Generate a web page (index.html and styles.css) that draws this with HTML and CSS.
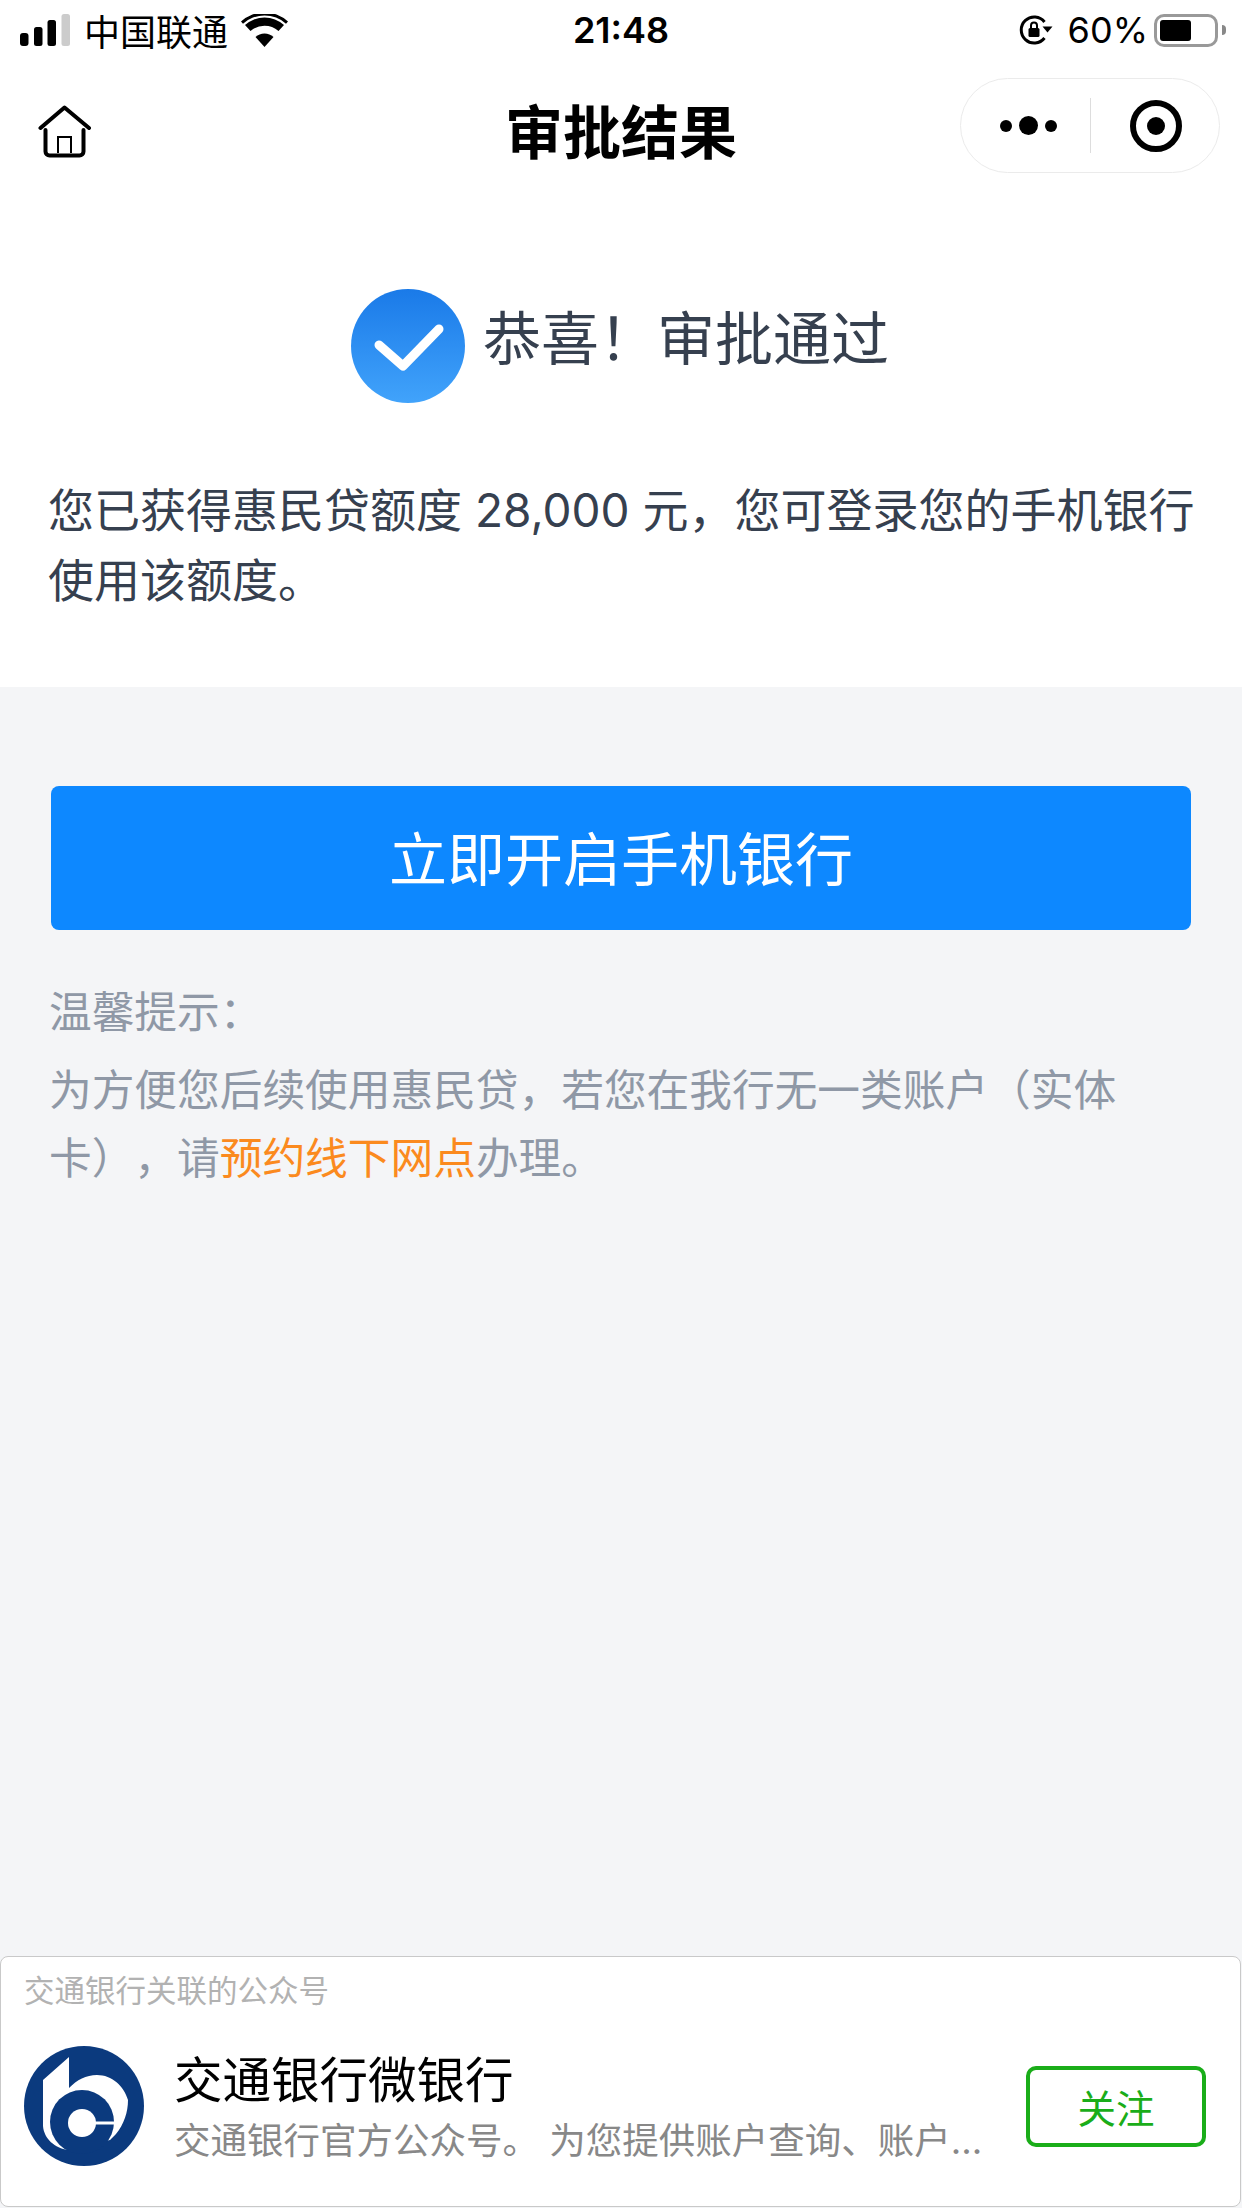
FILE: index.html
```html
<!DOCTYPE html>
<html lang="zh">
<head>
<meta charset="utf-8">
<title>审批结果</title>
<link rel="stylesheet" href="styles.css">
</head>
<body>
<div class="page">
  <header class="statusbar">
    <div class="sb-left">
      <svg class="signal" width="50" height="32" viewBox="0 0 50 32"><rect x="0" y="19" width="8.500" height="13" rx="3" fill="#000"/><rect x="14" y="13" width="8.500" height="19" rx="2.500" fill="#000"/><rect x="27.500" y="6" width="8.500" height="26" rx="2.500" fill="#000"/><rect x="41.500" y="0" width="8.500" height="32" rx="2.500" fill="#ccc"/></svg>
      <span class="carrier">中国联通</span>
      <svg class="wifi" width="47" height="33" viewBox="0 0 47 33"><path d="M23.500 33 14.500 23a13 13 0 0 1 18 0z" fill="#000"/><path d="M9.500 18 4 12a29 29 0 0 1 39 0l-5.500 6a21 21 0 0 0-28 0z" fill="#000" transform="translate(0 -1)"/><path d="M0 7.500a35 35 0 0 1 47 0l-2 2.200a32 32 0 0 0-43 0z" fill="#000"/></svg>
    </div>
    <div class="sb-time">21:48</div>
    <div class="sb-right">
      <svg class="lock" width="34" height="32" viewBox="0 0 34 32"><path d="M25.500 8A13 13 0 1 0 25.500 24" fill="none" stroke="#000" stroke-width="3"/><path d="M23.500 12.500h10l-5 6z" fill="#000"/><rect x="9.500" y="14" width="11" height="9" rx="1.500" fill="#000"/><path d="M12 14v-2.500a3 3 0 0 1 6 0V14" fill="none" stroke="#000" stroke-width="2"/></svg>
      <span class="pct">60%</span>
      <div class="battery"><div class="battery-fill"></div></div>
      <div class="battery-cap"></div>
    </div>
  </header>
  <nav class="navbar">
    <svg class="home" width="54" height="54" viewBox="0 0 54 54"><path d="M2.500 23 26.500 2.500 51 23" fill="none" stroke="#000" stroke-width="4" stroke-linecap="round" stroke-linejoin="round"/><path d="M7.500 25v21.500a4 4 0 0 0 4 4h30a4 4 0 0 0 4-4V25" fill="none" stroke="#000" stroke-width="4" stroke-linecap="round"/><path d="M20 48V32h13v16" fill="none" stroke="#000" stroke-width="2"/></svg>
    <h1 class="nav-title">审批结果</h1>
    <div class="capsule">
      <div class="dots"><i class="dot"></i><i class="dot dot-big"></i><i class="dot"></i></div>
      <div class="cap-sep"></div>
      <svg class="target" width="52" height="52" viewBox="0 0 52 52"><circle cx="26" cy="26" r="23" fill="none" stroke="#000" stroke-width="6"/><circle cx="26" cy="26" r="9" fill="#000"/></svg>
    </div>
  </nav>
  <section class="result">
    <div class="headline">
      <svg class="check" width="114" height="114" viewBox="0 0 114 114"><defs><linearGradient id="g" x1="0" y1="0" x2="0" y2="1"><stop offset="0" stop-color="#1a7ae8"/><stop offset="1" stop-color="#41a3fb"/></linearGradient></defs><circle cx="57" cy="57" r="57" fill="url(#g)"/><path d="M28 56 52 77 88 40" fill="none" stroke="#fff" stroke-width="9" stroke-linecap="round" stroke-linejoin="round"/></svg>
      <span class="headline-text">恭喜！审批通过</span>
    </div>
    <p class="desc">您已获得惠民贷额度 28,000 元，您可登录您的手机银行使用该额度。</p>
  </section>
  <main class="content">
    <button class="cta">立即开启手机银行</button>
    <p class="tip-title">温馨提示：</p>
    <p class="tip">为方便您后续使用惠民贷，若您在我行无一类账户（实体卡），请<span class="link">预约线下网点</span>办理。</p>
  </main>
  <footer class="card">
    <div class="card-label">交通银行关联的公众号</div>
    <div class="card-row">
      <svg class="logo" width="120" height="120" viewBox="0 0 120 120"><circle cx="60" cy="60" r="60" fill="#0b3a7e"/><path d="M45 11 19 34V80C20 93 31 102 44 104L86 94 92 88C100 78 104 66 104 54 100 40 88 29 73 29 62 29 53 34 45 42Z" fill="#fff"/><circle cx="58" cy="76" r="32" fill="#0b3a7e"/><circle cx="58" cy="77" r="14" fill="#fff"/><rect x="58" y="75.500" width="34" height="3" fill="#fff"/></svg>
      <div class="card-info">
        <div class="card-name">交通银行微银行</div>
        <div class="card-desc">交通银行官方公众号。 为您提供账户查询、账户...</div>
      </div>
      <button class="follow">关注</button>
    </div>
  </footer>
</div>
</body>
</html>
```
FILE: styles.css
```css
* { box-sizing: border-box; }
html, body { margin: 0; padding: 0; }
body { font-family: Inter, "Noto Sans CJK SC", sans-serif; background: #fff; text-spacing-trim: space-all; }
.page { width: 1242px; height: 2208px; display: flex; flex-direction: column; background: #f4f5f7; overflow: hidden; }
.statusbar { height: 60px; background: #fff; display: flex; align-items: center; justify-content: space-between; padding: 0 16px 0 20px; position: relative; }
.sb-left, .sb-right { display: flex; align-items: center; }
.carrier { font-size: 36px; margin: 0 13px 0 14px; color: #000; }
.sb-time { position: absolute; left: 0; right: 0; text-align: center; font-size: 36px; font-weight: 600; }
.pct { font-size: 36px; margin: 0 6px 0 15px; }
.battery { width: 64px; height: 33px; border: 3px solid #999; border-radius: 10px; padding: 3px; }
.battery-fill { width: 31px; height: 100%; background: #000; border-radius: 3px; }
.battery-cap { width: 4px; height: 10px; background: #888; border-radius: 0 4px 4px 0; margin-left: 4px; }
.navbar { height: 136px; background: #fff; position: relative; display: flex; align-items: center; justify-content: center; }
.home { position: absolute; left: 38px; top: 45px; }
.nav-title { margin: 0; font-size: 58px; font-weight: 700; color: #000; position: relative; top: 1px; }
.capsule { position: absolute; left: 960px; top: 18px; width: 260px; height: 95px; border: 1px solid #ebebeb; border-radius: 48px; display: flex; align-items: center; }
.dots { width: 129px; padding-left: 5px; display: flex; align-items: center; justify-content: center; gap: 7px; }
.dot { width: 12px; height: 12px; background: #000; border-radius: 50%; }
.dot-big { width: 19px; height: 19px; }
.cap-sep { width: 1px; height: 55px; background: #ddd; }
.target { margin-left: 39px; }
.result { background: #fff; height: 491px; padding: 93px 40px 0 48px; }
.headline { display: flex; align-items: center; justify-content: center; gap: 18px; height: 114px; margin-left: -10px; }
.headline-text { font-size: 58px; color: #36404f; position: relative; top: -11px; }
.desc { margin: 72px 0 0; font-size: 46px; line-height: 70px; color: #36404f; }
.content { flex: 1; padding: 99px 51px 0; }
.cta { display: block; width: 1140px; height: 144px; padding: 0 0 4px; background: #0d88ff; color: #fff; border: 0; border-radius: 8px; font: inherit; font-size: 58px; }
.tip-title { margin: 52px 0 0 -2px; font-size: 42.700px; line-height: 62px; color: #8f98a6; }
.tip { margin: 13px 0 0 -2px; font-size: 42.700px; line-height: 68px; color: #8f98a6; width: 1090px; }
.link { color: #fb8a1e; }
.card { height: 251px; margin: 0 1px 1px 0; background: #fff; border: 1px solid #c9c9c9; border-radius: 8px; padding: 0 34px 0 23px; }
.card-label { font-size: 30.500px; line-height: 36px; color: #b2b2b2; margin-top: 16px; }
.card-row { display: flex; align-items: center; margin-top: 37px; }
.card-info { flex: 1; margin-left: 30px; min-width: 0; }
.card-name { font-size: 48.500px; line-height: 60px; padding-top: 4px; color: #000; box-sizing: content-box; }
.card-desc { font-size: 36.500px; line-height: 50px; color: #888; margin-top: 5px; white-space: nowrap; }
.follow { width: 180px; height: 81px; border: 4px solid #1aad19; border-radius: 10px; background: #fff; color: #1aad19; font: inherit; font-size: 38.500px; }
```
